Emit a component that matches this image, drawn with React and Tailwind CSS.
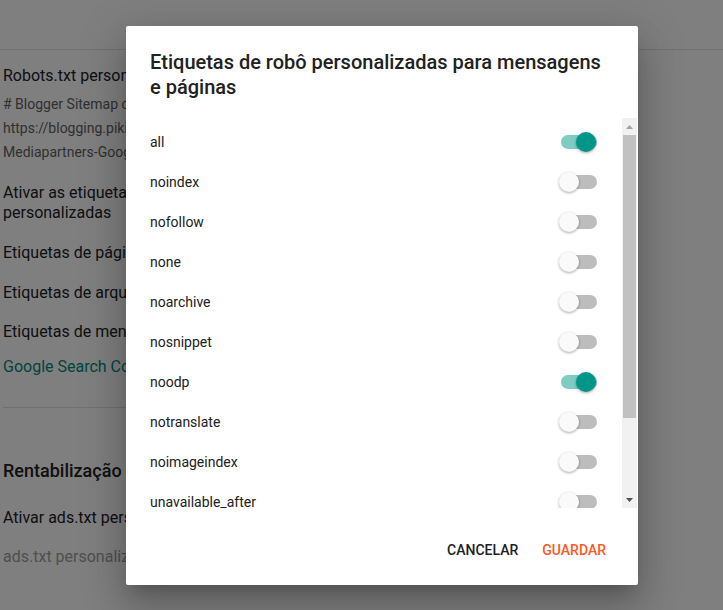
import React from "react";

const items = [
  ["all", true],
  ["noindex", false],
  ["nofollow", false],
  ["none", false],
  ["noarchive", false],
  ["nosnippet", false],
  ["noodp", true],
  ["notranslate", false],
  ["noimageindex", false],
  ["unavailable_after", false],
];

function Toggle({ on }) {
  return (
    <div className="relative w-[38px] h-5 shrink-0">
      <div
        className={
          "absolute left-[2px] top-[3px] w-[36px] h-[14px] rounded-full " +
          (on ? "bg-[#80cbc4]" : "bg-[#bdbdbd]")
        }
      />
      <div
        className={
          "absolute top-0 w-5 h-5 rounded-full shadow-[0_1px_3px_rgba(0,0,0,0.35)] " +
          (on ? "left-[17px] bg-[#009688]" : "left-0 bg-[#fafafa]")
        }
      />
    </div>
  );
}

export default function App() {
  return (
    <div
      className="relative w-full h-[610px] overflow-hidden bg-white"
      style={{ fontFamily: "Roboto, 'Liberation Sans', sans-serif" }}
    >
      {/* underlying page */}
      <div className="h-[50px] border-b border-[#e0e0e0]" />
      <div className="pl-[3px] w-[560px] text-[#202124] whitespace-nowrap">
        <div className="w-[123px] overflow-hidden">
          <div className="pt-4 text-base leading-5">Robots.txt personalizado</div>
          <div className="mt-[6px] text-sm leading-6 text-[#616161]">
            <div># Blogger Sitemap created</div>
            <div>https://blogging.pikiran</div>
            <div>Mediapartners-Google</div>
          </div>
          <div className="mt-[19px] text-base leading-5">
            <div>Ativar as etiquetas de</div>
            <div>personalizadas</div>
          </div>
          <div className="mt-[9px] text-base">
            <div className="h-10 flex items-center pt-[1px]">Etiquetas de página</div>
            <div className="h-10 flex items-center pt-[1px]">Etiquetas de arquivo</div>
            <div className="h-10 flex items-center">Etiquetas de mensagens</div>
          </div>
          <div className="mt-[5px] text-base leading-5 text-[#00897b]">Google Search Console</div>
        </div>
        <div className="mt-[30px] border-t border-[#e0e0e0]" />
        <div className="w-[123px] overflow-hidden">
          <div className="mt-[51px] text-lg leading-6 font-medium">Rentabilização</div>
          <div className="mt-[25px] text-base leading-5">Ativar ads.txt personalizado</div>
          <div className="mt-[19px] text-base leading-5 text-[#9e9e9e]">ads.txt personalizado</div>
        </div>
      </div>

      {/* overlay */}
      <div className="absolute inset-0 bg-black/50" />

      {/* dialog */}
      <div className="absolute left-[126px] top-[26px] w-[512px] h-[559px] bg-white rounded-[2px] shadow-[0_11px_15px_-7px_rgba(0,0,0,0.2),0_24px_38px_3px_rgba(0,0,0,0.14),0_9px_46px_8px_rgba(0,0,0,0.12)] flex flex-col">
        <div className="pt-6 px-6 text-[20px] leading-[25px] font-medium text-[#212121]">
          Etiquetas de robô personalizadas para mensagens e páginas
        </div>
        <div className="mt-[18px] flex h-[390px]">
          <div className="flex-1 overflow-hidden pt-[4px] pl-6 pr-[25px]">
            {items.map(([label, on]) => (
              <div key={label} className="h-10 flex items-center justify-between">
                <span className="text-sm text-[#212121]">{label}</span>
                <Toggle on={on} />
              </div>
            ))}
          </div>
          <div className="w-[15px] mr-px bg-[#f1f1f1] flex flex-col items-center">
            <div className="h-[17px] flex items-center justify-center">
              <svg width="7" height="4" viewBox="0 0 7 4">
                <path d="M0 4 L3.5 0 L7 4 Z" fill="#a3a3a3" />
              </svg>
            </div>
            <div className="w-[13px] h-[283px] bg-[#c1c1c1]" />
            <div className="flex-1" />
            <div className="h-[17px] flex items-center justify-center">
              <svg width="7" height="4" viewBox="0 0 7 4">
                <path d="M0 0 L7 0 L3.5 4 Z" fill="#505050" />
              </svg>
            </div>
          </div>
        </div>
        <div className="flex justify-end gap-2 pt-6 px-6">
          <button className="h-9 px-2 text-sm font-medium tracking-normal text-[#212121] uppercase">
            Cancelar
          </button>
          <button className="h-9 px-2 text-sm font-medium tracking-normal text-[#ff5722] uppercase">
            Guardar
          </button>
        </div>
      </div>
    </div>
  );
}
